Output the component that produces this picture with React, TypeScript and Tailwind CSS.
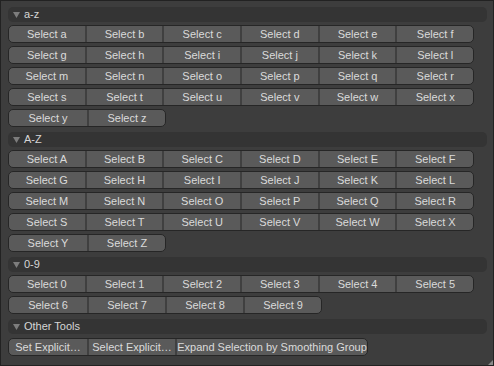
import React from "react";

const lower = "abcdefghijklmnopqrstuvwxyz".split("");
const upper = "ABCDEFGHIJKLMNOPQRSTUVWXYZ".split("");
const digits = "0123456789".split("");

function chunk<T>(arr: T[], n: number): T[][] {
  const out: T[][] = [];
  for (let i = 0; i < arr.length; i += n) out.push(arr.slice(i, i + n));
  return out;
}

function Header({ title }: { title: string }) {
  return (
    <div className="flex h-[15px] w-[479px] items-center rounded-[5px] bg-[#343434] pl-[5px]">
      <svg width="7" height="6" viewBox="0 0 7 6" className="mr-[4px]">
        <path d="M0 0 L7 0 L3.5 6 Z" fill="#7d7d7d" />
      </svg>
      <span className="text-[11px] leading-none text-[#d6d6d6]">{title}</span>
    </div>
  );
}

function Row({ labels, full, widths }: { labels: string[]; full?: boolean; widths?: number[] }) {
  return (
    <div
      className={
        "flex h-[18px] overflow-hidden rounded-[5px] border border-[#262626] bg-[#5a5a5a] " +
        (full ? "w-[466px]" : "self-start")
      }
    >
      {labels.map((l, i) => (
        <div
          key={l}
          className={
            "flex h-full items-center justify-center whitespace-nowrap text-[11px] leading-none text-[#dadada] " +
            (i > 0 ? "border-l-2 border-[#404040] " : "") +
            (full ? "flex-1" : "")
          }
          style={!full ? { width: widths ? widths[i] : 78 } : undefined}
        >
          {l}
        </div>
      ))}
    </div>
  );
}

function Section({
  title,
  items,
  last,
}: {
  title: string;
  items: string[];
  last?: boolean;
}) {
  const rows = chunk(items, 6);
  return (
    <div className={"flex flex-col " + (last ? "" : "mb-[5px]")}>
      <Header title={title} />
      <div className="mt-[3px] flex flex-col gap-[3px]">
        {rows.map((r, i) => (
          <Row key={i} labels={r.map((c) => "Select " + c)} full={r.length === 6} />
        ))}
      </div>
    </div>
  );
}

export default function App() {
  return (
    <div
      className="relative h-[366px] w-[494px] overflow-hidden border border-[#222222] bg-[#3d3d3d] pl-[7px] pt-[6px]"
      style={{ fontFamily: "'Liberation Sans', Arial, sans-serif" }}
    >
      <Section title="a-z" items={lower} />
      <Section title="A-Z" items={upper} />
      <Section title="0-9" items={digits} />
      <div className="flex flex-col">
        <Header title="Other Tools" />
        <div className="mt-[4px] flex">
          <Row
            labels={["Set Explicit…", "Select Explicit…", "Expand Selection by Smoothing Group"]}
            widths={[78, 88, 192]}
          />
        </div>
      </div>
      <svg className="absolute bottom-0 right-0" width="5" height="5" viewBox="0 0 5 5">
        <path d="M5 0 L5 5 L0 5 Z" fill="#8a8a8a" />
      </svg>
    </div>
  );
}
